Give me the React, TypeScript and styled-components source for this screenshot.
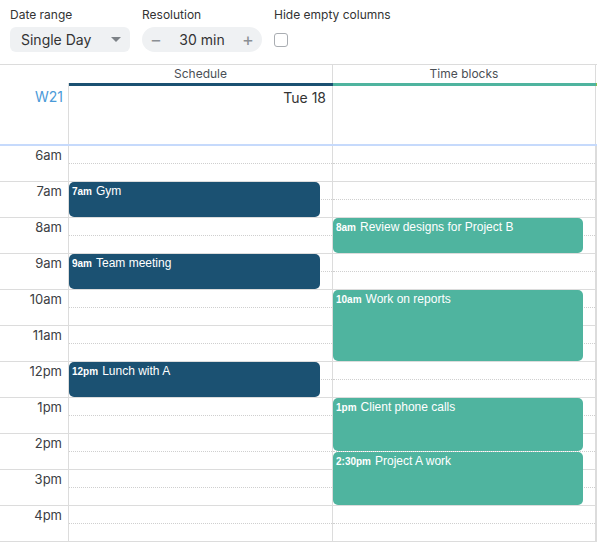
import React from 'react';
import styled, { createGlobalStyle } from 'styled-components';

const HOUR_HEIGHT = 36;
const FIRST_HOUR = 6;

interface CalEvent {
    start: number;
    duration: number;
    time: string;
    title: string;
}

interface Column {
    id: string;
    title: string;
    color: string;
    day?: string;
    events: CalEvent[];
}

const hours = ['6am', '7am', '8am', '9am', '10am', '11am', '12pm', '1pm', '2pm', '3pm', '4pm'];

const columns: Column[] = [
    {
        id: 'schedule',
        title: 'Schedule',
        color: '#1b5172',
        day: 'Tue 18',
        events: [
            { start: 7, duration: 1, time: '7am', title: 'Gym' },
            { start: 9, duration: 1, time: '9am', title: 'Team meeting' },
            { start: 12, duration: 1, time: '12pm', title: 'Lunch with A' },
        ],
    },
    {
        id: 'blocks',
        title: 'Time blocks',
        color: '#4fb49f',
        events: [
            { start: 8, duration: 1, time: '8am', title: 'Review designs for Project B' },
            { start: 10, duration: 2, time: '10am', title: 'Work on reports' },
            { start: 13, duration: 1.5, time: '1pm', title: 'Client phone calls' },
            { start: 14.5, duration: 1.5, time: '2:30pm', title: 'Project A work' },
        ],
    },
    {
        id: 'more',
        title: '',
        color: '#8dc04a',
        events: [],
    },
];

const GlobalStyle = createGlobalStyle`
    body {
        margin: 0;
        overflow: hidden;
        font-family: Inter, "Liberation Sans", sans-serif;
        color: #333;
        background: #ffffff;
    }
`;

export default function App(): React.ReactElement {
    return (
        <>
            <GlobalStyle />
            <Page>
                <Toolbar>
                    <Field>
                        <FieldLabel>Date range</FieldLabel>
                        <Select>
                            <span>Single Day</span>
                            <Caret />
                        </Select>
                    </Field>
                    <Field>
                        <FieldLabel>Resolution</FieldLabel>
                        <Stepper>
                            <StepButton>−</StepButton>
                            <StepValue>30 min</StepValue>
                            <StepButton>+</StepButton>
                        </Stepper>
                    </Field>
                    <Field>
                        <FieldLabel>Hide empty columns</FieldLabel>
                        <CheckRow>
                            <Checkbox />
                        </CheckRow>
                    </Field>
                </Toolbar>

                <Calendar>
                    <HeaderRow>
                        <GutterHead>
                            <LabelSpacer />
                            <WeekCell>W21</WeekCell>
                        </GutterHead>
                        {columns.map((col) => (
                            <ColumnHead key={col.id}>
                                <ColumnLabel>{col.title}</ColumnLabel>
                                <ColorBar color={col.color} />
                                <DayCell>{col.day}</DayCell>
                            </ColumnHead>
                        ))}
                    </HeaderRow>

                    <BodyGrid>
                        <GutterBody>
                            {hours.map((h) => (
                                <HourLabel key={h}>{h}</HourLabel>
                            ))}
                        </GutterBody>
                        {columns.map((col) => (
                            <DayColumn key={col.id}>
                                {hours.map((h) => (
                                    <Slot key={h}>
                                        <HalfLine />
                                    </Slot>
                                ))}
                                {col.events.map((ev) => (
                                    <EventBlock
                                        key={ev.time}
                                        color={col.color}
                                        style={{
                                            top: (ev.start - FIRST_HOUR) * HOUR_HEIGHT,
                                            height: ev.duration * HOUR_HEIGHT - 1,
                                        }}
                                    >
                                        <EventTime>{ev.time}</EventTime>
                                        {ev.title}
                                    </EventBlock>
                                ))}
                            </DayColumn>
                        ))}
                    </BodyGrid>
                </Calendar>
            </Page>
        </>
    );
}

const Page = styled.div`
    width: 597px;
    height: 542px;
    overflow: hidden;
`;

const Toolbar = styled.div`
    display: flex;
    gap: 12px;
    padding: 7px 10px 11px;
    height: 64px;
    box-sizing: border-box;
`;

const Field = styled.div`
    display: flex;
    flex-flow: column;
    gap: 4px;
`;

const FieldLabel = styled.div`
    font-size: 12px;
    line-height: 16px;
    color: #333;
`;

const Select = styled.div`
    display: flex;
    align-items: center;
    justify-content: space-between;
    width: 120px;
    height: 25px;
    box-sizing: border-box;
    padding: 0 9px 0 11px;
    background: #eff1f3;
    border-radius: 6px;
    font-size: 14px;
    color: #333;
`;

const Caret = styled.span`
    width: 0;
    height: 0;
    border-left: 5px solid transparent;
    border-right: 5px solid transparent;
    border-top: 5px solid #7d8287;
`;

const Stepper = styled.div`
    display: flex;
    align-items: center;
    justify-content: space-between;
    width: 120px;
    height: 25px;
    box-sizing: border-box;
    padding: 0 8px;
    background: #eff1f3;
    border-radius: 13px;
`;

const StepButton = styled.span`
    font-size: 18px;
    line-height: 18px;
    color: #8a8f94;
    width: 12px;
    text-align: center;
`;

const StepValue = styled.span`
    font-size: 14px;
    color: #333;
`;

const CheckRow = styled.div`
    display: flex;
    align-items: center;
    height: 25px;
`;

const Checkbox = styled.span`
    width: 14px;
    height: 14px;
    box-sizing: border-box;
    border: 1px solid #a9adb2;
    border-radius: 3px;
    background: #fff;
`;

const Calendar = styled.div`
    border-top: 1px solid #dcdcdc;
`;

const HeaderRow = styled.div`
    display: grid;
    grid-template-columns: 69px 264px 263px 1fr;
    border-bottom: 2px solid #c6dafc;
`;

const GutterHead = styled.div`
    display: flex;
    flex-flow: column;
`;

const LabelSpacer = styled.div`
    height: 18px;
`;

const WeekCell = styled.div`
    flex: 1;
    border-right: 1px solid #dcdcdc;
    padding: 6px 5px 0 0;
    text-align: right;
    font-size: 14px;
    line-height: 16px;
    color: #4a9ad8;
`;

const ColumnHead = styled.div`
    display: flex;
    flex-flow: column;
    border-right: 1px solid #dcdcdc;
`;

const ColumnLabel = styled.div`
    height: 18px;
    line-height: 18px;
    text-align: center;
    font-size: 12px;
    color: #4a4f55;
`;

const ColorBar = styled.div<{ color: string }>`
    height: 3px;
    margin-right: -1px;
    background: ${(p) => p.color};
`;

const DayCell = styled.div`
    height: 58px;
    box-sizing: border-box;
    padding: 4px 6px 0 0;
    text-align: right;
    font-size: 14px;
    line-height: 16px;
    color: #333;
`;

const BodyGrid = styled.div`
    display: grid;
    grid-template-columns: 69px 264px 263px 1fr;
`;

const GutterBody = styled.div`
    border-right: 1px solid #dcdcdc;
`;

const HourLabel = styled.div`
    height: ${HOUR_HEIGHT}px;
    box-sizing: border-box;
    border-bottom: 1px solid #dcdcdc;
    padding: 1px 6px 0 0;
    text-align: right;
    font-size: 13px;
    line-height: 16px;
    color: #3c4044;
`;

const DayColumn = styled.div`
    position: relative;
    border-right: 1px solid #dcdcdc;
`;

const Slot = styled.div`
    height: ${HOUR_HEIGHT}px;
    box-sizing: border-box;
    border-bottom: 1px solid #dcdcdc;
`;

const HalfLine = styled.div`
    height: 18px;
    box-sizing: border-box;
    border-bottom: 1px dotted #cfcfcf;
`;

const EventBlock = styled.div<{ color: string }>`
    position: absolute;
    left: 0;
    right: 12px;
    box-sizing: border-box;
    padding: 1px 3px 0;
    border-radius: 5px;
    background: ${(p) => p.color};
    color: #fff;
    font-family: "Liberation Sans", Arial, sans-serif;
    font-size: 12px;
    line-height: 16px;
    overflow: hidden;
    white-space: nowrap;
`;

const EventTime = styled.span`
    font-size: 10px;
    font-weight: bold;
    margin-right: 4px;
`;
